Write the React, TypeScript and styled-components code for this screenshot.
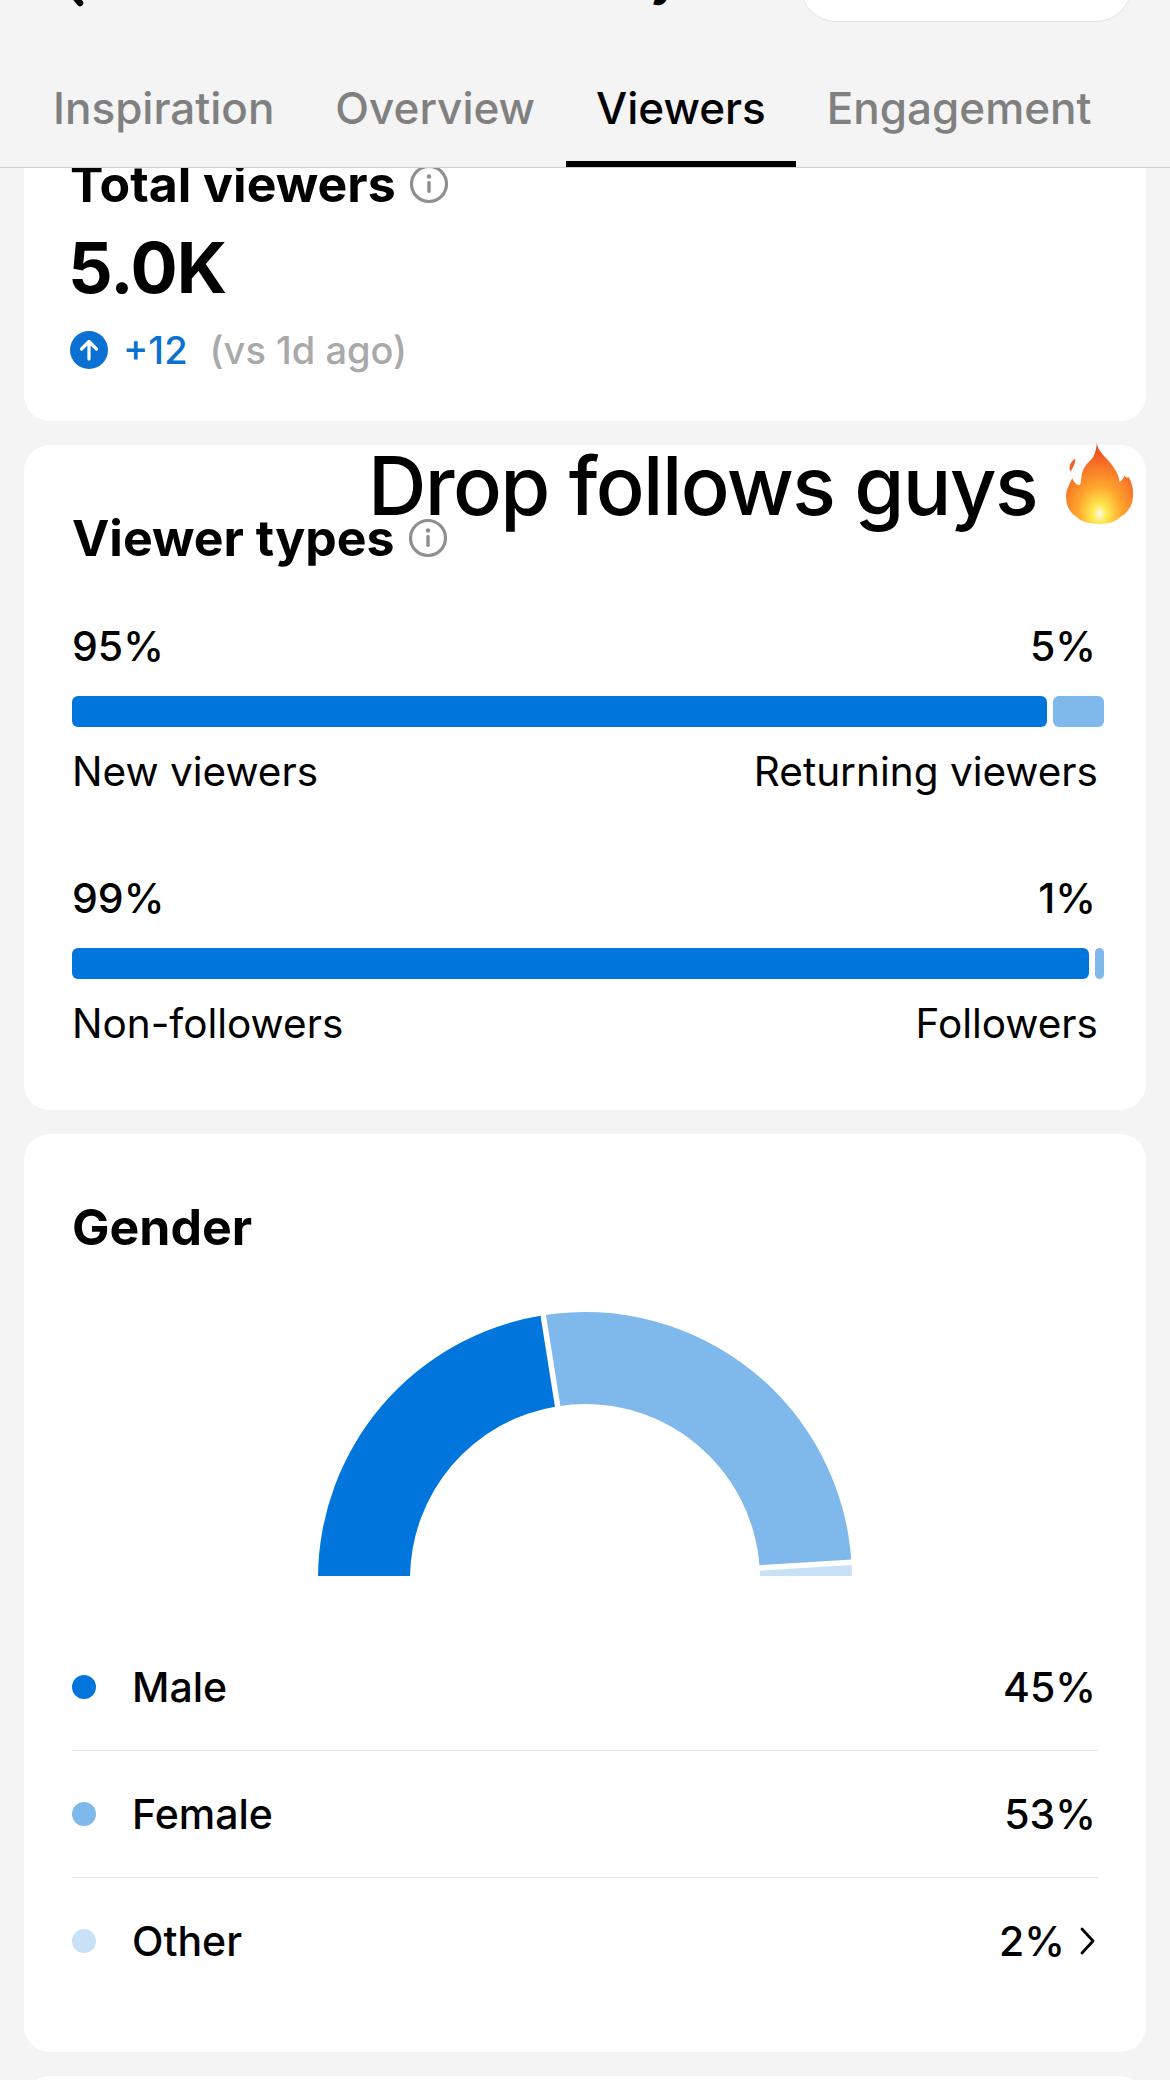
import React from "react";
import styled, { createGlobalStyle } from "styled-components";

const BLUE = "#0075db";
const MID = "#7fb8eb";
const PALE = "#c9e1f6";

const Global = createGlobalStyle`
  html, body { margin: 0; padding: 0; background: #f4f4f4; }
  body { font-family: Inter, "Liberation Sans", sans-serif; color: #000; }
`;

const Page = styled.div`
  width: 1170px;
  height: 2080px;
  overflow: hidden;
  display: flex;
  flex-direction: column;
  background: #f4f4f4;
`;

const Header = styled.header`
  flex: none;
  height: 168px;
  box-sizing: border-box;
  border-bottom: 1px solid #cfcfcf;
  position: relative;
  z-index: 1;
  background: #f4f4f4;
`;

const TopBar = styled.div`
  height: 22px;
  overflow: hidden;
  display: flex;
  align-items: flex-end;
  justify-content: space-between;
  padding: 0 38px 0 52px;
`;

const BackIcon = styled.svg`
  width: 40px;
  height: 60px;
  flex: none;
  margin-bottom: 13px;
`;

const Title = styled.div`
  font-size: 46px;
  line-height: 60px;
  font-weight: 700;
  margin: 0 0 13px 248px;
  white-space: nowrap;
`;

const Pill = styled.div`
  width: 332px;
  height: 80px;
  flex: none;
  background: #fff;
  border: 1px solid #e4e4e4;
  border-radius: 36px;
  box-sizing: border-box;
`;

const Tabs = styled.nav`
  display: flex;
  margin-top: 37px;
  padding-left: 53px;
`;

const Tab = styled.div<{ $active?: boolean }>`
  height: 108px;
  box-sizing: border-box;
  padding: 0 30.5px;
  font-size: 44px;
  line-height: 98px;
  font-weight: 500;
  color: ${(p) => (p.$active ? "#000" : "#808080")};
  border-bottom: 6px solid ${(p) => (p.$active ? "#000" : "transparent")};
  &:first-child { padding-left: 0; }
`;

const Scroller = styled.main`
  flex: 1;
  min-height: 0;
  overflow: hidden;
  display: flex;
  flex-direction: column;
  gap: 24px;
  padding: 0 24px;
`;

const Card = styled.section`
  flex: none;
  position: relative;
  background: #fff;
  border-radius: 26px;
  padding: 0 48px;
`;

const TotalCard = styled(Card)`
  margin-top: -46px;
  height: 299px;
  padding: 33px 46px 0;
  box-sizing: border-box;
`;

const TypesCard = styled(Card)`
  height: 665px;
  padding-top: 64px;
  box-sizing: border-box;
`;

const GenderCard = styled(Card)`
  height: 918px;
  padding-top: 64px;
  box-sizing: border-box;
`;

const NextCard = styled(Card)`
  height: 60px;
`;

const Heading = styled.h2`
  margin: 0;
  display: flex;
  align-items: center;
  gap: 13px;
  font-size: 50px;
  line-height: 58px;
  font-weight: 700;
`;

const InfoIcon = styled.svg`
  width: 40px;
  height: 40px;
  flex: none;
`;

const BigValue = styled.div`
  margin: 14px 0 0 -2px;
  font-size: 70px;
  line-height: 82px;
  font-weight: 700;
  letter-spacing: -1px;
`;

const DeltaRow = styled.div`
  display: flex;
  align-items: center;
  margin-top: 19px;
  font-size: 38px;
  line-height: 44px;
  font-weight: 500;
`;

const ArrowBadge = styled.svg`
  width: 38px;
  height: 38px;
  flex: none;
  margin-right: 15px;
`;

const DeltaValue = styled.span`
  color: #0a70d2;
  margin-right: 22px;
`;

const DeltaNote = styled.span`
  color: #a9a9a9;
`;

const Caption = styled.div`
  position: absolute;
  left: 344px;
  top: -8px;
  display: flex;
  align-items: center;
  font-size: 81px;
  line-height: 98px;
  font-weight: 550;
  letter-spacing: -1.6px;
  white-space: nowrap;
`;

const Flame = styled.svg`
  width: 70px;
  height: 86px;
  flex: none;
  margin: -8px 0 0 28px;
`;

const Split = styled.div`
  margin-top: 56px;
  & + & { margin-top: 80px; }
`;

const SplitRow = styled.div`
  display: flex;
  justify-content: space-between;
  font-size: 40.5px;
  line-height: 46px;
  font-weight: 400;
`;

const Percent = styled(SplitRow)`
  font-size: 41px;
  font-weight: 500;
  padding-right: 2px;
`;

const Track = styled.div`
  display: flex;
  gap: 6px;
  height: 31px;
  margin: 27px -6px 22px 0;
`;

const Segment = styled.div<{ $color: string; $grow: number }>`
  flex: ${(p) => p.$grow} 0 0;
  background: ${(p) => p.$color};
  border-radius: 6px;
  min-width: 0;
`;

const ChartBox = styled.div`
  display: flex;
  justify-content: center;
  margin-top: 55px;
`;

const Chart = styled.svg`
  width: 534px;
  height: 265px;
  display: block;
`;

const Legend = styled.ul`
  list-style: none;
  margin: 48px 0 0;
  padding: 0;
`;

const LegendRow = styled.li`
  height: 126px;
  display: flex;
  align-items: center;
  font-size: 41px;
  font-weight: 500;
  border-bottom: 1px solid #e6e6e6;
  &:last-child { border-bottom: none; }
`;

const Dot = styled.span<{ $color: string }>`
  width: 24px;
  height: 24px;
  border-radius: 50%;
  background: ${(p) => p.$color};
  margin-right: 36px;
  flex: none;
`;

const LegendValue = styled.span`
  margin-left: auto;
  display: flex;
  align-items: center;
  padding-right: 2px;
`;

const Chevron = styled.svg`
  width: 18px;
  height: 30px;
  margin: 0 0 0 13px;
`;

const Info = () => (
  <InfoIcon viewBox="0 0 40 40">
    <circle cx="20" cy="20" r="17.5" fill="none" stroke="#8f8f8f" strokeWidth="3.2" />
    <circle cx="20" cy="12.5" r="2.2" fill="#8f8f8f" />
    <rect x="18.3" y="17" width="3.4" height="12" rx="1.4" fill="#8f8f8f" />
  </InfoIcon>
);

const CX = 267;
const CY = 268;
const R1 = 267;
const R2 = 175;

// pct is measured along the half ring, left to right
const point = (pct: number, r: number) => {
  const a = Math.PI * (1 - pct / 100);
  return `${(CX + r * Math.cos(a)).toFixed(2)} ${(CY - r * Math.sin(a)).toFixed(2)}`;
};

const sector = (from: number, to: number) =>
  `M${point(from, R1)} A${R1} ${R1} 0 0 1 ${point(to, R1)} L${point(to, R2)} A${R2} ${R2} 0 0 0 ${point(from, R2)} Z`;

const seam = (pct: number) => `M${point(pct, R1 + 4)} L${point(pct, R2 - 4)}`;

const genders = [
  { name: "Male", value: 45, color: BLUE },
  { name: "Female", value: 53, color: MID },
  { name: "Other", value: 2, color: PALE },
];

const App = () => {
  return (
    <Page>
      <Global />
      <Header>
        <TopBar>
          <BackIcon viewBox="0 0 40 60">
            <path d="M28 6 L8 30 L28 54" fill="none" stroke="#000" strokeWidth="6.5" strokeLinecap="round" strokeLinejoin="round" />
          </BackIcon>
          <Title>Summary</Title>
          <Pill />
        </TopBar>
        <Tabs>
          <Tab>Inspiration</Tab>
          <Tab>Overview</Tab>
          <Tab $active>Viewers</Tab>
          <Tab>Engagement</Tab>
        </Tabs>
      </Header>
      <Scroller>
        <TotalCard>
          <Heading>
            Total viewers <Info />
          </Heading>
          <BigValue>5.0K</BigValue>
          <DeltaRow>
            <ArrowBadge viewBox="0 0 38 38">
              <circle cx="19" cy="19" r="19" fill="#0a70d2" />
              <path d="M19 28 V11 M11.5 18 L19 10.5 L26.5 18" fill="none" stroke="#fff" strokeWidth="3.2" strokeLinecap="round" strokeLinejoin="round" />
            </ArrowBadge>
            <DeltaValue>+12</DeltaValue>
            <DeltaNote>(vs 1d ago)</DeltaNote>
          </DeltaRow>
        </TotalCard>

        <TypesCard>
          <Caption>
            Drop follows guys
            <Flame viewBox="0 0 68 84">
              <defs>
                <radialGradient id="fire" cx="0.5" cy="0.88" r="0.78">
                  <stop offset="0" stopColor="#fffbe6" />
                  <stop offset="0.14" stopColor="#ffe84f" />
                  <stop offset="0.42" stopColor="#ffa62d" />
                  <stop offset="0.8" stopColor="#f66a25" />
                  <stop offset="1" stopColor="#ee4a1c" />
                </radialGradient>
              </defs>
              <path
                d="M31 0 C30 9 35 13 42 21 C49 29 53 36 53 42 C54 42 56 40 58 36 C59 38 61 38 62 37 C66 44 67 51 66 58 C65 68 58 74 54 76 C50 81 42 83 33 83 C25 83 15 81 11 76 C5 72 1 66 1 58 C0 52 3 46 7 38 C8 42 11 45 14 45 C16 44 15 38 17 32 C19 25 24 22 27 18 C30 13 31 7 31 0 Z"
                fill="url(#fire)"
              />
              <path d="M10 19 C10 23 8 28 5 32 C3 27 5 22 10 19 Z" fill="#f4602a" />
            </Flame>
          </Caption>
          <Heading>
            Viewer types <Info />
          </Heading>
          <Split>
            <Percent>
              <span>95%</span>
              <span>5%</span>
            </Percent>
            <Track>
              <Segment $color={BLUE} $grow={975} />
              <Segment $color={MID} $grow={51} />
            </Track>
            <SplitRow>
              <span>New viewers</span>
              <span>Returning viewers</span>
            </SplitRow>
          </Split>
          <Split>
            <Percent>
              <span>99%</span>
              <span>1%</span>
            </Percent>
            <Track>
              <Segment $color={BLUE} $grow={1016} />
              <Segment $color={MID} $grow={9} />
            </Track>
            <SplitRow>
              <span>Non-followers</span>
              <span>Followers</span>
            </SplitRow>
          </Split>
        </TypesCard>

        <GenderCard>
          <Heading>Gender</Heading>
          <ChartBox>
            <Chart viewBox="0 0 534 265">
              <path d={sector(0, 45)} fill={BLUE} />
              <path d={sector(45, 98)} fill={MID} />
              <path d={sector(98, 100)} fill={PALE} />
              <path d={seam(45)} stroke="#fff" strokeWidth="5.5" />
              <path d={seam(98)} stroke="#fff" strokeWidth="5.5" />
            </Chart>
          </ChartBox>
          <Legend>
            {genders.map((g, i) => (
              <LegendRow key={g.name}>
                <Dot $color={g.color} />
                {g.name}
                <LegendValue>
                  {g.value}%
                  {i === genders.length - 1 && (
                    <Chevron viewBox="0 0 18 30">
                      <path d="M4 3 L15 15 L4 27" fill="none" stroke="#000" strokeWidth="2.8" strokeLinecap="round" strokeLinejoin="round" />
                    </Chevron>
                  )}
                </LegendValue>
              </LegendRow>
            ))}
          </Legend>
        </GenderCard>

        <NextCard />
      </Scroller>
    </Page>
  );
};

export default App;
